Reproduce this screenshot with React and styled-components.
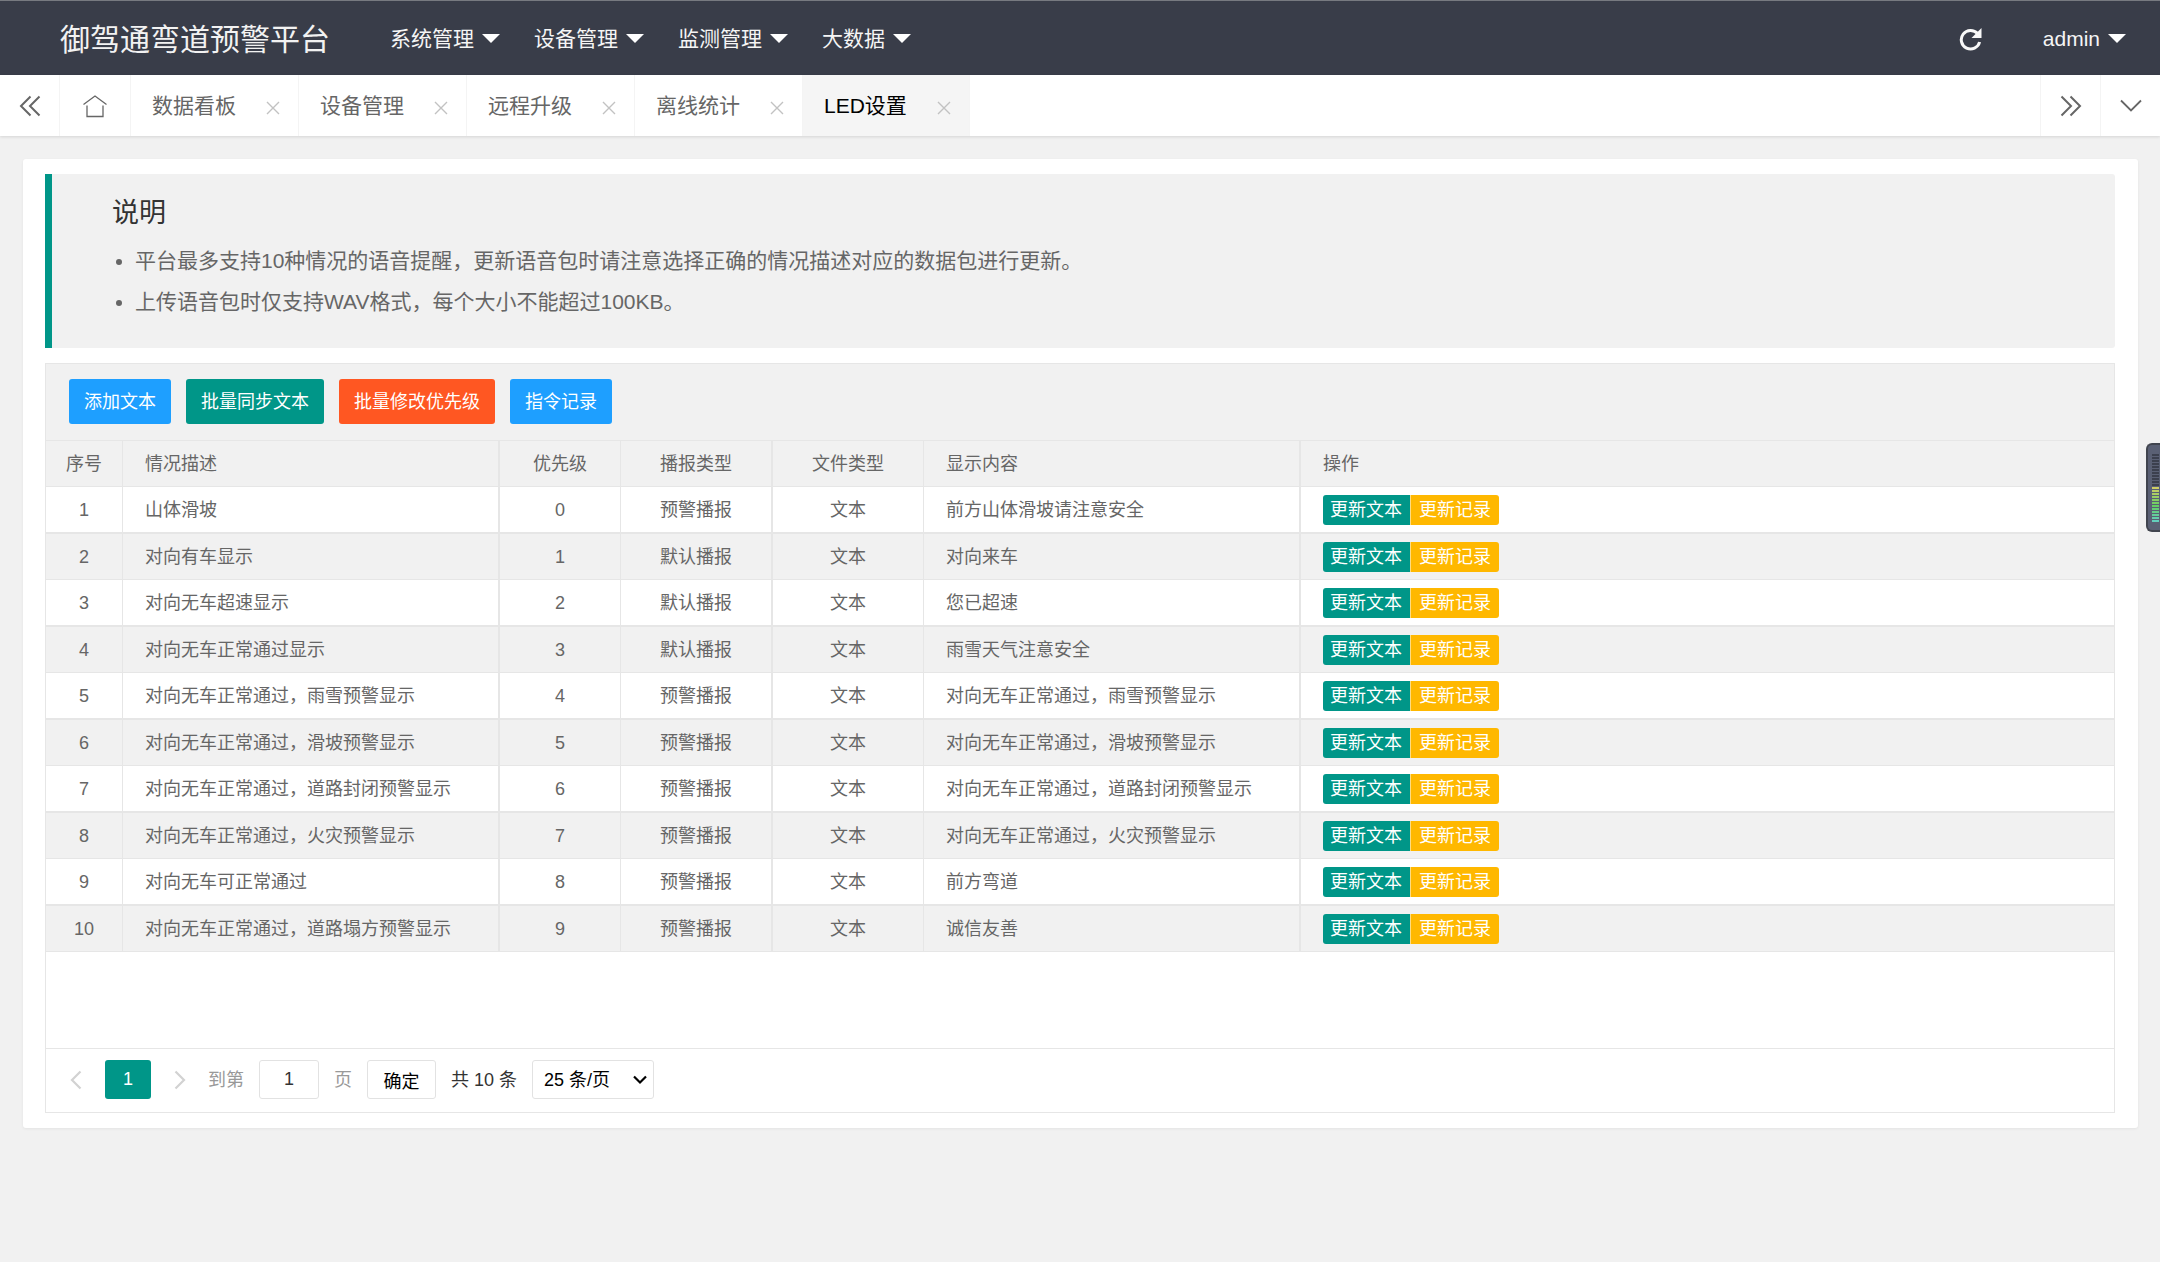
import React, { useState } from "react";
import styled, { createGlobalStyle, css } from "styled-components";

const NAV_ITEMS = ["系统管理", "设备管理", "监测管理", "大数据"];

const TABS = ["数据看板", "设备管理", "远程升级", "离线统计", "LED设置"];

const NOTICES = [
  "平台最多支持10种情况的语音提醒，更新语音包时请注意选择正确的情况描述对应的数据包进行更新。",
  "上传语音包时仅支持WAV格式，每个大小不能超过100KB。",
];

const TOOLBAR_BUTTONS = [
  { label: "添加文本", color: "#1e9fff" },
  { label: "批量同步文本", color: "#009688" },
  { label: "批量修改优先级", color: "#ff5722" },
  { label: "指令记录", color: "#1e9fff" },
];

const ROWS = [
  { desc: "山体滑坡", type: "预警播报", content: "前方山体滑坡请注意安全" },
  { desc: "对向有车显示", type: "默认播报", content: "对向来车" },
  { desc: "对向无车超速显示", type: "默认播报", content: "您已超速" },
  { desc: "对向无车正常通过显示", type: "默认播报", content: "雨雪天气注意安全" },
  {
    desc: "对向无车正常通过，雨雪预警显示",
    type: "预警播报",
    content: "对向无车正常通过，雨雪预警显示",
  },
  {
    desc: "对向无车正常通过，滑坡预警显示",
    type: "预警播报",
    content: "对向无车正常通过，滑坡预警显示",
  },
  {
    desc: "对向无车正常通过，道路封闭预警显示",
    type: "预警播报",
    content: "对向无车正常通过，道路封闭预警显示",
  },
  {
    desc: "对向无车正常通过，火灾预警显示",
    type: "预警播报",
    content: "对向无车正常通过，火灾预警显示",
  },
  { desc: "对向无车可正常通过", type: "预警播报", content: "前方弯道" },
  {
    desc: "对向无车正常通过，道路塌方预警显示",
    type: "预警播报",
    content: "诚信友善",
  },
];

function App() {
  const [activeTab, setActiveTab] = useState("LED设置");
  const [pageInput, setPageInput] = useState("1");
  const [pageSize, setPageSize] = useState("25");

  return (
    <>
      <GlobalStyle />

      <Header>
        <Logo>御驾通弯道预警平台</Logo>

        <Nav>
          {NAV_ITEMS.map((item) => (
            <NavLink key={item} href="#">
              {item}
              <Caret />
            </NavLink>
          ))}
        </Nav>

        <HeaderRight>
          <RefreshButton type="button" aria-label="刷新">
            <RefreshIcon />
          </RefreshButton>

          <NavLink href="#">
            admin
            <Caret />
          </NavLink>
        </HeaderRight>
      </Header>

      <TabBar>
        <TabControl type="button" aria-label="向左" $width={60} $side="right">
          <DoubleChevron $flip />
        </TabControl>
        <TabControl type="button" aria-label="首页" $width={71} $side="right">
          <HomeIcon />
        </TabControl>

        <TabList>
          {TABS.map((tab) => (
            <Tab key={tab} $active={tab === activeTab}>
              <TabName type="button" onClick={() => setActiveTab(tab)}>
                {tab}
              </TabName>
              <TabClose type="button" aria-label={`关闭${tab}`}>
                <CloseIcon />
              </TabClose>
            </Tab>
          ))}
        </TabList>

        <TabControl type="button" aria-label="向右" $width={60} $side="left">
          <DoubleChevron />
        </TabControl>
        <TabControl type="button" aria-label="更多" $width={60} $side="left">
          <DownIcon />
        </TabControl>
      </TabBar>

      <Card>
        <Notice>
          <NoticeTitle>说明</NoticeTitle>
          <NoticeList>
            {NOTICES.map((text) => (
              <li key={text}>{text}</li>
            ))}
          </NoticeList>
        </Notice>

        <TableView>
          <Toolbar>
            {TOOLBAR_BUTTONS.map((button) => (
              <ToolbarButton
                key={button.label}
                type="button"
                $color={button.color}
              >
                {button.label}
              </ToolbarButton>
            ))}
          </Toolbar>

          <TableBody>
            <Table>
              <colgroup>
                <Col $width={77} />
                <Col $width={377} />
                <Col $width={121} />
                <Col $width={152} />
                <Col $width={151} />
                <Col $width={377} />
                <col />
              </colgroup>
              <thead>
                <HeadRow>
                  <HeadCell $center>序号</HeadCell>
                  <HeadCell $thick>情况描述</HeadCell>
                  <HeadCell $center>优先级</HeadCell>
                  <HeadCell $center $thick>
                    播报类型
                  </HeadCell>
                  <HeadCell $center>文件类型</HeadCell>
                  <HeadCell $thick>显示内容</HeadCell>
                  <HeadCell>操作</HeadCell>
                </HeadRow>
              </thead>
              <tbody>
                {ROWS.map((row, index) => (
                  <Row key={row.desc}>
                    <Cell $center>{index + 1}</Cell>
                    <Cell $thick>{row.desc}</Cell>
                    <Cell $center>{index}</Cell>
                    <Cell $center $thick>
                      {row.type}
                    </Cell>
                    <Cell $center>文本</Cell>
                    <Cell $thick>{row.content}</Cell>
                    <Cell>
                      <ButtonGroup>
                        <RowButton type="button" $color="#009688">
                          更新文本
                        </RowButton>
                        <RowButton type="button" $color="#ffb800">
                          更新记录
                        </RowButton>
                      </ButtonGroup>
                    </Cell>
                  </Row>
                ))}
              </tbody>
            </Table>
          </TableBody>

          <Pagination>
            <PageArrow type="button" aria-label="上一页" disabled>
              <ChevronIcon $flip />
            </PageArrow>
            <CurrentPage type="button">1</CurrentPage>
            <PageArrow type="button" aria-label="下一页" disabled>
              <ChevronIcon />
            </PageArrow>

            <JumpLabel>
              <PageText>到第</PageText>
              <PageInput
                type="text"
                value={pageInput}
                onChange={(event) => setPageInput(event.target.value)}
              />
              <PageText>页</PageText>
            </JumpLabel>
            <ConfirmButton type="button">确定</ConfirmButton>

            <Total>共 10 条</Total>

            <SelectWrap>
              <PageSelect
                aria-label="每页条数"
                value={pageSize}
                onChange={(event) => setPageSize(event.target.value)}
              >
                <option value="10">10 条/页</option>
                <option value="25">25 条/页</option>
                <option value="50">50 条/页</option>
              </PageSelect>
              <SelectArrow width="14" height="10" viewBox="0 0 14 10" fill="none">
                <path d="M1 1.500l6 6 6-6" stroke="#000" strokeWidth="2.200" />
              </SelectArrow>
            </SelectWrap>
          </Pagination>
        </TableView>
      </Card>

      <LevelMeter />
    </>
  );
}

export default App;

// =========================================================
// 图标
// =========================================================

function RefreshIcon() {
  return (
    <svg width="24" height="24" viewBox="0 0 24 24" fill="none">
      <path
        d="M18.6 6.6A9.3 9.3 0 1 0 20.6 15"
        stroke="#f8f8f8"
        strokeWidth="3"
      />
      <path d="M22.5 1v10h-10z" fill="#f8f8f8" />
    </svg>
  );
}

function HomeIcon() {
  return (
    <svg width="26" height="24" viewBox="0 0 26 24" fill="none" stroke="#666">
      <path
        d="M1.500 10.500L13 2l11.500 8.500M5 11.500v11h16v-11"
        strokeWidth="1.300"
      />
    </svg>
  );
}

function CloseIcon() {
  return (
    <svg width="14" height="14" viewBox="0 0 14 14" stroke="#c2c2c2">
      <path d="M1 1l12 12M13 1L1 13" strokeWidth="1.4" />
    </svg>
  );
}

function DoubleChevron({ $flip }) {
  return (
    <Glyph
      $flip={$flip}
      width="22"
      height="22"
      viewBox="0 0 22 22"
      fill="none"
      stroke="#666"
    >
      <path d="M1.5 1.5l9.5 9.5-9.5 9.5M10.5 1.5L20 11l-9.5 9.5" strokeWidth="2" />
    </Glyph>
  );
}

function DownIcon() {
  return (
    <svg width="22" height="22" viewBox="0 0 22 22" fill="none" stroke="#666">
      <path d="M1 5.5l10 10 10-10" strokeWidth="1.8" />
    </svg>
  );
}

function ChevronIcon({ $flip }) {
  return (
    <Glyph
      $flip={$flip}
      width="12"
      height="20"
      viewBox="0 0 12 20"
      fill="none"
      stroke="#d2d2d2"
    >
      <path d="M1.5 1.5L10 10l-8.500 8.500" strokeWidth="2.200" />
    </Glyph>
  );
}

// 右侧悬浮的电平条
function LevelMeter() {
  const bars = Array.from({ length: 23 }, (_, index) => index);

  return (
    <MeterBox>
      <svg width="7" height="69" viewBox="0 0 7 69">
        {bars.map((index) => (
          <rect
            key={index}
            x="0"
            y={index * 3}
            width="7"
            height="2"
            fill={index < 11 ? "#3c404e" : getBarColor(index - 11)}
          />
        ))}
      </svg>
    </MeterBox>
  );
}

function getBarColor(step) {
  const hue = 60 + step * 10;

  return `hsl(${hue}, 52%, 60%)`;
}

// =========================================================
// styled-components
// =========================================================

const GlobalStyle = createGlobalStyle`
  * {
    box-sizing: border-box;
  }

  body {
    margin: 0;

    background: #f1f1f1;

    color: #666666;
  }

  body,
  button,
  input,
  select {
    font-family: "Liberation Sans", "Noto Sans CJK SC", sans-serif;
  }
`;

const Glyph = styled.svg`
  transform: ${({ $flip }) => ($flip ? "scaleX(-1)" : "none")};
`;

const Header = styled.header`
  display: flex;
  align-items: center;

  height: 75px;
  padding: 2px 34px 0 60px;

  border-top: 1px solid #777a80;

  background: #393d49;
`;

const Logo = styled.div`
  font-size: 30px;
  line-height: 45px;
  color: #f2f2f2;
`;

const Nav = styled.nav`
  display: flex;
  gap: 34px;

  margin-left: 60px;
`;

const NavLink = styled.a`
  display: flex;
  align-items: center;
  gap: 8px;

  font-size: 21px;
  line-height: 30px;
  color: #f5f5f5;
  text-decoration: none;
`;

const Caret = styled.span`
  margin-bottom: 2px;

  border: 9px solid transparent;
  border-top-color: #ffffff;
  border-bottom-width: 0;
`;

const HeaderRight = styled.div`
  display: flex;
  align-items: center;
  gap: 60px;

  margin-left: auto;
`;

const RefreshButton = styled.button`
  display: flex;

  padding: 0;

  border: none;

  background: none;

  cursor: pointer;
`;

const TabBar = styled.div`
  position: relative;

  display: flex;

  height: 61px;

  background: #ffffff;
  box-shadow: 0 1px 3px rgba(0, 0, 0, 0.12);
`;

const TabControl = styled.button`
  display: flex;
  align-items: center;
  justify-content: center;

  flex: none;
  width: ${({ $width }) => $width}px;
  padding: 0;

  border: 0 solid #f4f4f4;
  ${({ $side }) => css`border-${$side}-width: 1px;`}

  background: none;

  cursor: pointer;
`;

const TabList = styled.div`
  display: flex;
  flex: 1;
`;

const Tab = styled.div`
  display: flex;
  align-items: center;
  gap: 30px;

  padding: 0 18px 0 21px;

  border-right: 1px solid #f4f4f4;

  background: ${({ $active }) => ($active ? "#f5f5f5" : "transparent")};

  color: ${({ $active }) => ($active ? "#000000" : "#666666")};
`;

const TabName = styled.button`
  padding: 0;

  border: none;

  background: none;

  font-size: 21px;
  line-height: 30px;
  color: inherit;

  cursor: pointer;
`;

const TabClose = styled.button`
  display: flex;

  padding: 4px 0 0;

  border: none;

  background: none;

  cursor: pointer;
`;

const Card = styled.main`
  margin: 23px 22px 22px 23px;
  padding: 15px 23px 15px 22px;

  border-radius: 3px;

  background: #ffffff;
  box-shadow: 0 1px 3px rgba(0, 0, 0, 0.06);
`;

const Notice = styled.section`
  padding: 19px 23px 26px 60px;

  border-left: 7px solid #009688;
  border-radius: 0 3px 3px 0;

  background: #f1f1f1;
`;

const NoticeTitle = styled.h2`
  margin: 0 0 6px;

  font-size: 27px;
  font-weight: 400;
  line-height: 41px;
  color: #333333;
`;

const NoticeList = styled.ul`
  margin: 0;
  padding-left: 23px;

  font-size: 21px;
  line-height: 41px;
`;

const TableView = styled.section`
  margin-top: 15px;

  border: 1px solid #e6e6e6;
`;

const Toolbar = styled.div`
  display: flex;
  gap: 15px;

  padding: 15px 23px 16px;

  border-bottom: 1px solid #e6e6e6;

  background: #f1f1f1;
`;

const ToolbarButton = styled.button`
  height: 45px;
  padding: 0 15px 4px;

  border: none;
  border-radius: 3px;

  background: ${({ $color }) => $color};

  font-size: 18px;
  color: #ffffff;

  cursor: pointer;
`;

const TableBody = styled.div`
  min-height: 607px;
`;

const Table = styled.table`
  width: 100%;

  border-collapse: separate;
  border-spacing: 0;
  table-layout: fixed;

  font-size: 18px;
  line-height: 30px;
`;

const Col = styled.col`
  width: ${({ $width }) => $width}px;
`;

const HeadRow = styled.tr`
  background: #f1f1f1;
`;

const Row = styled.tr`
  background: #ffffff;

  &:nth-child(even) {
    background: #f1f1f1;
  }

  &:nth-child(odd) td {
    border-bottom-width: 2px;
  }
`;

const cellStyle = css`
  padding: 8px 22px 7px;

  border: 0 solid #e6e6e6;
  border-right-width: ${({ $thick }) => ($thick ? 2 : 1)}px;
  border-bottom-width: 1px;

  font-weight: 400;
  text-align: ${({ $center }) => ($center ? "center" : "left")};
  white-space: nowrap;

  ${({ $center }) => $center && "padding-left: 0; padding-right: 0;"}

  &:last-child {
    border-right-width: 0;
  }
`;

const HeadCell = styled.th`
  ${cellStyle}
`;

const Cell = styled.td`
  ${cellStyle}
`;

const ButtonGroup = styled.div`
  display: flex;
`;

const RowButton = styled.button`
  height: 30px;
  padding: 0 8px 0 7px;

  border: none;

  background: ${({ $color }) => $color};

  font-size: 18px;
  line-height: 30px;
  color: #ffffff;

  cursor: pointer;

  &:first-child {
    border-radius: 3px 0 0 3px;
  }

  &:last-child {
    padding: 0 8px;

    border-left: 1px solid rgba(255, 255, 255, 0.5);
    border-radius: 0 3px 3px 0;
  }
`;

const Pagination = styled.div`
  display: flex;
  align-items: center;

  padding: 11px 13px 13px;

  border-top: 1px solid #e6e6e6;

  font-size: 18px;
  color: #333333;
`;

const PageArrow = styled.button`
  display: flex;
  align-items: center;
  justify-content: center;

  width: 34px;
  height: 39px;
  padding: 0;

  border: none;

  background: none;
`;

const CurrentPage = styled.button`
  width: 46px;
  height: 39px;
  margin: 0 12px;
  padding: 0;

  border: none;
  border-radius: 3px;

  background: #009688;

  font-size: 18px;
  color: #ffffff;
`;

const JumpLabel = styled.label`
  display: flex;
  align-items: center;
  gap: 15px;

  margin-left: 11px;

  color: #999999;
`;

const PageText = styled.span`
  padding-bottom: 3px;
`;

const PageInput = styled.input`
  width: 60px;
  height: 39px;
  padding: 0 4px;

  border: 1px solid #e2e2e2;
  border-radius: 3px;

  background: #ffffff;

  font-family: inherit;
  font-size: 18px;
  text-align: center;
  color: #333333;
`;

const ConfirmButton = styled.button`
  min-width: 69px;
  height: 39px;
  margin-left: 15px;
  padding: 0 15px;

  border: 1px solid #e2e2e2;
  border-radius: 3px;

  background: #ffffff;

  font-size: 18px;
  color: #000000;

  cursor: pointer;
`;

const Total = styled(PageText)`
  margin: 0 15px;
`;

const SelectWrap = styled.div`
  position: relative;
`;

const PageSelect = styled.select`
  display: block;

  width: 122px;
  height: 39px;
  padding: 0 11px;

  border: 1px solid #e2e2e2;
  border-radius: 3px;

  background: #ffffff;

  font-size: 18px;
  color: #000000;

  appearance: none;
`;

const SelectArrow = styled.svg`
  position: absolute;
  top: 15px;
  right: 7px;

  pointer-events: none;
`;

const MeterBox = styled.aside`
  position: fixed;
  top: 443px;
  right: 0;

  width: 14px;
  height: 89px;
  padding: 9px 0 0 4px;

  border: 2px solid #41454f;
  border-right: none;
  border-radius: 6px 0 0 6px;

  background: #5a6074;
`;
